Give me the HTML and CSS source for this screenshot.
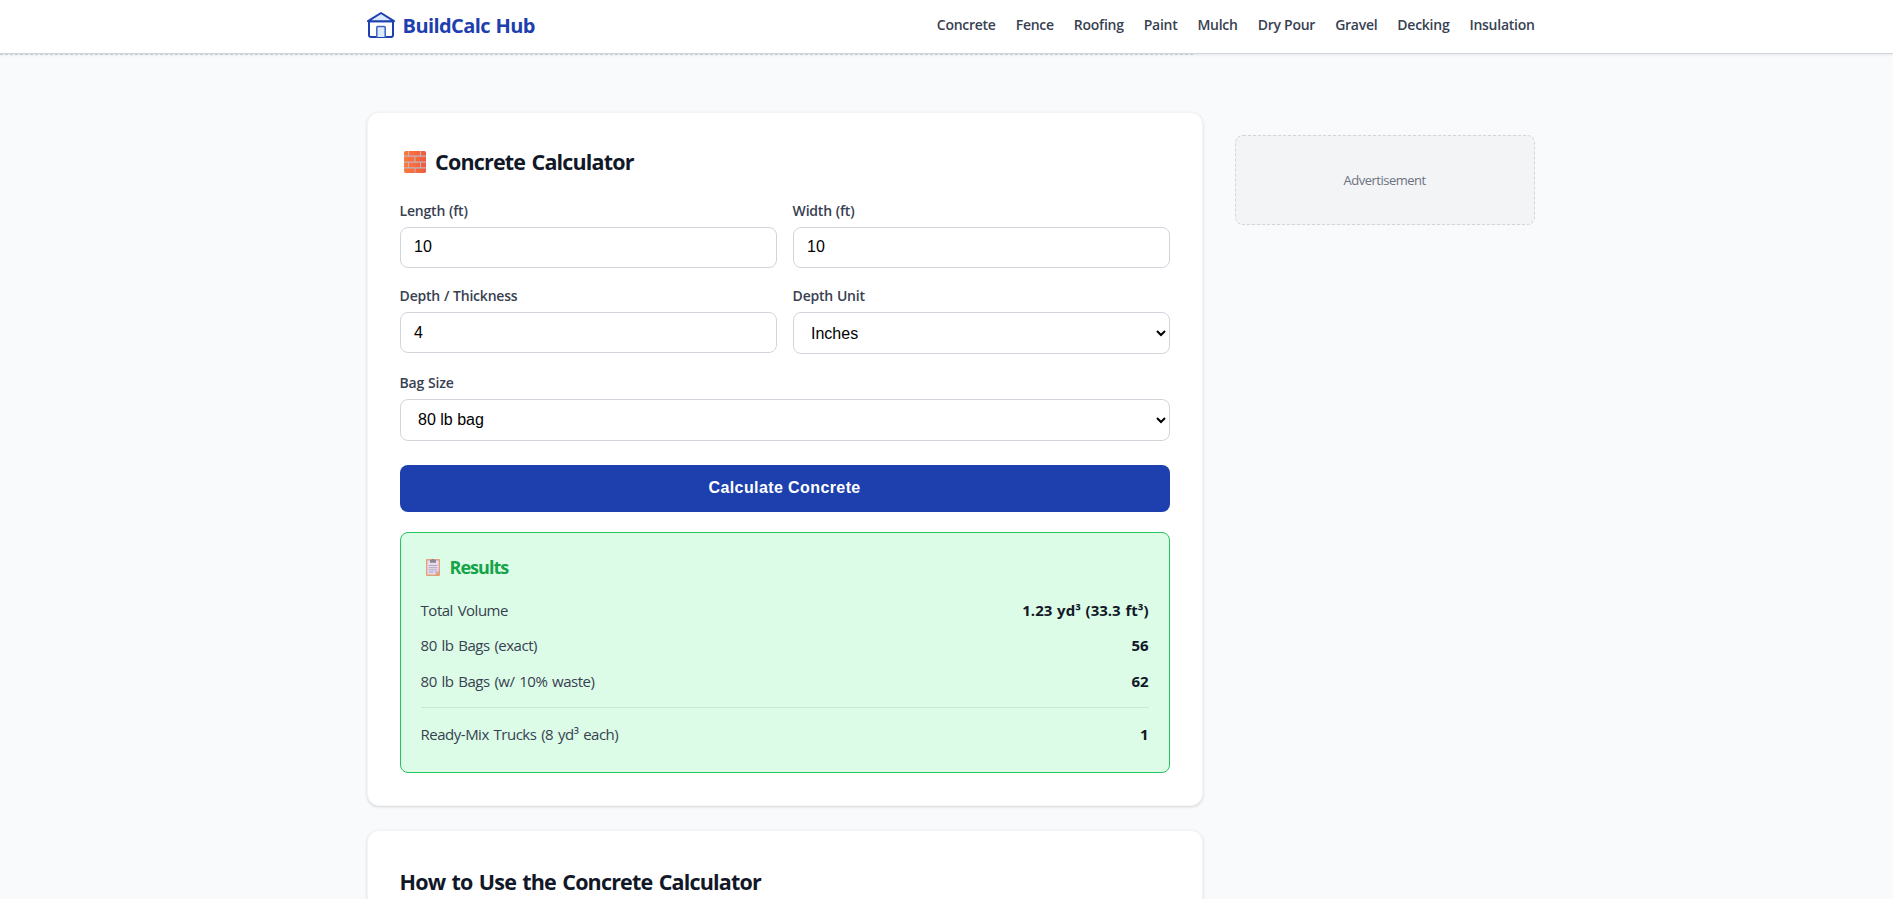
FILE: index.html
```
<!DOCTYPE html>
<html lang="en">
<head>
  <meta charset="UTF-8">
  <title>Concrete Calculator - BuildCalc Hub</title>
  <link rel="stylesheet" href="styles.css">
</head>
<body>
  <header class="site-header">
    <div class="container header-inner">
      <a class="logo" href="#">
        <svg class="logo-icon" viewBox="0 0 28 28" fill="none" stroke="#1e40af" stroke-width="2" stroke-linejoin="round" stroke-linecap="round">
          <path d="M2 10.200h24V24a2 2 0 0 1-2 2H4a2 2 0 0 1-2-2z" fill="#fff"/>
          <path d="M1 10.200 14 2l13 8.200z" fill="#dbeafe"/>
          <path d="M9.800 26V16.500a1 1 0 0 1 1-1h6.400a1 1 0 0 1 1 1V26" fill="#dbeafe" stroke="#3f60c4" stroke-width="1.500"/>
        </svg>
        <span class="logo-text">BuildCalc Hub</span>
      </a>
      <nav class="nav">
        <a href="#">Concrete</a>
        <a href="#">Fence</a>
        <a href="#">Roofing</a>
        <a href="#">Paint</a>
        <a href="#">Mulch</a>
        <a href="#">Dry Pour</a>
        <a href="#">Gravel</a>
        <a href="#">Decking</a>
        <a href="#">Insulation</a>
      </nav>
    </div>
  </header>
  <div class="ad-top"></div>

  <div class="container layout">
    <main>
      <section class="card calculator">
        <h1>
          <svg class="brick" viewBox="0 0 22 22">
            <defs>
              <linearGradient id="clay" x1="0" x2="1">
                <stop offset="0" stop-color="#ff7a3d"/>
                <stop offset="1" stop-color="#ee5a3c"/>
              </linearGradient>
            </defs>
            <rect width="22" height="22" rx="2" fill="#c3b5bd"/>
            <g fill="url(#clay)">
              <path d="M2 0h2v4.500H0V2a2 2 0 0 1 2-2zM5 0h11v4.500H5zM17 0h3a2 2 0 0 1 2 2v2.500h-5z"/>
              <path d="M0 5.800h10.500v4.700H0zM11.500 5.800H22v4.700H11.500z"/>
              <path d="M0 11.700h4v4.600H0zM5 11.700h11v4.600H5zM17 11.700h5v4.600h-5z"/>
              <path d="M0 17.500h10.500V22H2a2 2 0 0 1-2-2zM11.500 17.500H22V20a2 2 0 0 1-2 2h-8.500z"/>
            </g>
          </svg>
          <span>Concrete Calculator</span>
        </h1>
        <div class="form-grid">
          <div class="field">
            <label for="length">Length (ft)</label>
            <input class="raised" type="text" id="length" value="10">
          </div>
          <div class="field">
            <label for="width">Width (ft)</label>
            <input class="raised" type="text" id="width" value="10">
          </div>
          <div class="field">
            <label for="depth">Depth / Thickness</label>
            <input type="text" id="depth" value="4">
          </div>
          <div class="field">
            <label for="unit">Depth Unit</label>
            <select id="unit"><option>Inches</option><option>Feet</option></select>
          </div>
          <div class="field full">
            <label for="bag">Bag Size</label>
            <select class="raised" id="bag"><option>80 lb bag</option><option>60 lb bag</option></select>
          </div>
        </div>
        <button class="btn" type="button">Calculate Concrete</button>

        <div class="results">
          <h3>
            <svg class="clipboard" viewBox="0 0 14 17">
              <rect width="14" height="17" rx="1" fill="#e3a077"/>
              <path d="M1.300 1.500h11.400V12l-3.500 3.500H1.300z" fill="#e6dcef"/>
              <path d="M12.700 12 9.200 15.500V12z" fill="#c5b5d4"/>
              <path d="M4 1h1.500a1.500 1.500 0 0 1 3 0H10v2.800H4z" fill="#8d8497"/>
              <path d="M2.700 6.500h8.600M2.700 8.700h8.600M2.700 10.900h8.600M2.700 13.100h5" stroke="#aaa0b8" stroke-width=".9"/>
            </svg>
            <span>Results</span>
          </h3>
          <div class="row"><span>Total Volume</span><strong>1.23 yd³ (33.3 ft³)</strong></div>
          <div class="row"><span>80 lb Bags (exact)</span><strong>56</strong></div>
          <div class="row"><span>80 lb Bags (w/ 10% waste)</span><strong>62</strong></div>
          <div class="row trucks"><span>Ready-Mix Trucks (8 yd³ each)</span><strong>1</strong></div>
        </div>
      </section>

      <section class="card how-to">
        <h2>How to Use the Concrete Calculator</h2>
      </section>
    </main>

    <aside class="sidebar">
      <div class="ad-box">Advertisement</div>
    </aside>
  </div>
</body>
</html>
```
FILE: styles.css
```
* {
  box-sizing: border-box;
  margin: 0;
  padding: 0;
}

body {
  font-family: "Segoe UI", "Open Sans", sans-serif;
  background: #f9fafc;
  color: #111827;
  height: 899px;
  overflow: hidden;
}

.container {
  width: 1168px;
  margin-left: 366.6px;
}

/* Header */
.site-header {
  height: 54px;
  background: #fff;
  border-bottom: 1px solid #d1d5db;
  box-shadow: 0 1px 3px rgba(0, 0, 0, 0.08);
}

.header-inner {
  display: flex;
  justify-content: space-between;
  align-items: center;
  height: 50px;
}

.logo {
  display: flex;
  align-items: center;
  gap: 8px;
  color: #1e40af;
  text-decoration: none;
}

.logo-icon {
  width: 28px;
  height: 28px;
}

.logo-text {
  font-size: 20px;
  font-weight: 700;
  letter-spacing: -0.6px;
  word-spacing: 1px;
}

.nav {
  display: flex;
  gap: 20px;
  padding-bottom: 1px;
}

.nav a {
  color: #374151;
  font-size: 14px;
  font-weight: 600;
  letter-spacing: -0.26px;
  text-decoration: none;
}

.ad-top {
  width: 1193px;
  height: 1px;
  border-top: 1px dashed #c5cad2;
}

/* Page layout */
.layout {
  display: grid;
  grid-template-columns: 836px 300px;
  gap: 32px;
  margin-top: 57px;
}

.card {
  background: #fff;
  border: 1px solid #f3f4f6;
  border-radius: 12px;
  padding: 32px;
  margin-bottom: 24px;
  box-shadow: 0 1px 3px rgba(0, 0, 0, 0.15);
}

.calculator {
  height: 694px;
}

.how-to {
  padding-top: 33px;
}

h1,
h2 {
  font-size: 21.5px;
  font-weight: 700;
  line-height: 36px;
  letter-spacing: -0.82px;
  word-spacing: 1.5px;
}

h1 {
  display: flex;
  align-items: center;
  gap: 9.5px;
  height: 34px;
  padding-left: 4px;
}

.brick {
  width: 22px;
  height: 22px;
}

/* Form */
.form-grid {
  display: grid;
  grid-template-columns: 1fr 1fr;
  column-gap: 16px;
  row-gap: 17px;
  margin-top: 21px;
}

.full {
  grid-column: 1 / -1;
  margin-top: 1px;
}

label {
  display: block;
  height: 27px;
  line-height: 21px;
  font-size: 14px;
  font-weight: 600;
  letter-spacing: -0.2px;
  word-spacing: 0.4px;
  color: #374151;
}

input,
select {
  display: block;
  width: 100%;
  height: 41px;
  padding: 0 13.4px;
  border: 1px solid #d1d5db;
  border-radius: 8px;
  background: #fff;
  color: #000;
  font-family: "Liberation Sans", Arial, sans-serif;
  font-size: 16px;
}

select {
  height: 42px;
  padding: 0 0 0 13.4px;
}

.raised {
  padding-bottom: 2px;
}

.btn {
  display: block;
  width: 100%;
  height: 47px;
  margin-top: 24px;
  padding-bottom: 2px;
  border: none;
  border-radius: 8px;
  background: #1e40af;
  color: #fff;
  font-family: "Liberation Sans", Arial, sans-serif;
  font-size: 16px;
  font-weight: 700;
  letter-spacing: 0.4px;
}

/* Results */
.results {
  height: 241px;
  margin-top: 20px;
  padding: 20px;
  border: 1px solid #22c55e;
  border-radius: 8px;
  background: #dcfce7;
}

.results h3 {
  display: flex;
  align-items: center;
  gap: 10px;
  height: 28px;
  margin-bottom: 11px;
  padding-left: 5px;
  color: #16a34a;
  font-size: 18px;
  font-weight: 700;
  letter-spacing: -1px;
}

.clipboard {
  width: 14px;
  height: 17px;
}

.row {
  display: flex;
  justify-content: space-between;
  align-items: center;
  height: 35.5px;
  font-size: 15px;
}

.row span {
  color: #374151;
  letter-spacing: -0.5px;
  word-spacing: 1.4px;
}

.row strong {
  font-weight: 700;
  word-spacing: 0.9px;
}

.trucks {
  height: 53px;
  margin-top: 8px;
  border-top: 1px solid #c9e8d5;
}

/* Sidebar */
.ad-box {
  display: flex;
  align-items: center;
  justify-content: center;
  height: 90px;
  margin-top: 23px;
  border: 1px dashed #d1d5db;
  border-radius: 8px;
  background: #f3f4f6;
  color: #6b7280;
  font-size: 13px;
  letter-spacing: -0.5px;
}
```
